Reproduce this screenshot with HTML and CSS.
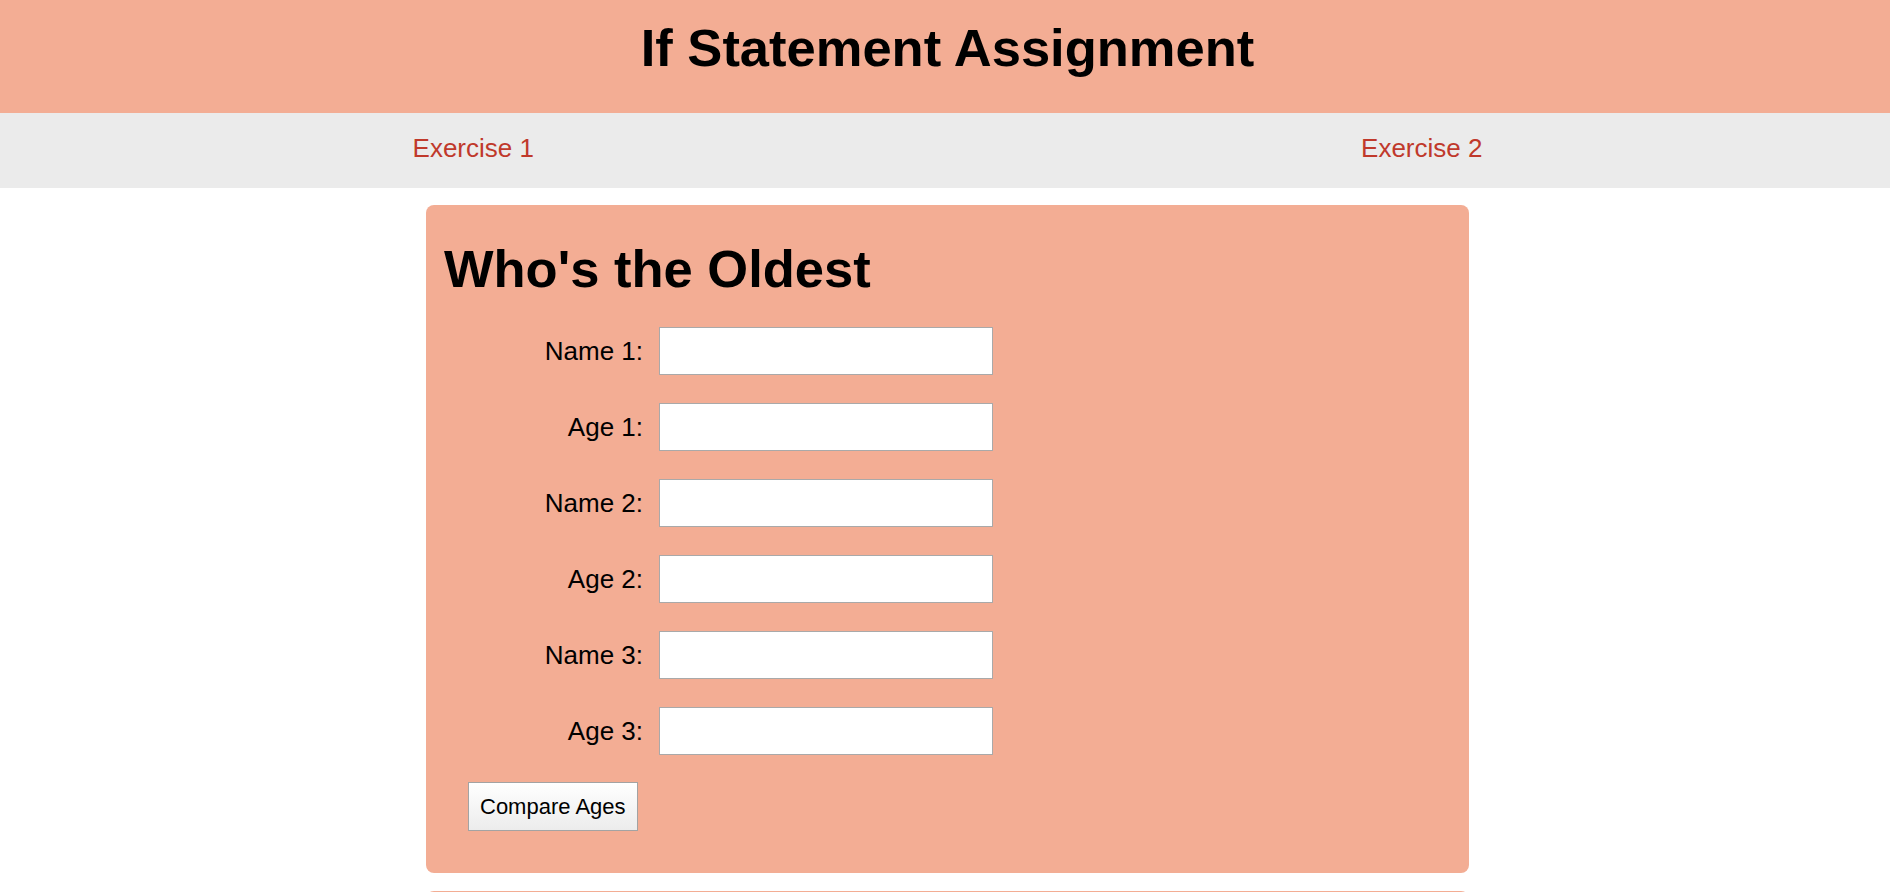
FILE: index.html
```html
<!DOCTYPE html>
<html lang="en">
<head>
<meta charset="utf-8">
<title>If Statement Assignment</title>
<link rel="stylesheet" href="styles.css">
</head>
<body>
<div class="page">
  <header class="header">
    <h1 class="title">If Statement Assignment</h1>
  </header>
  <nav class="nav">
    <a class="nav-link" href="#ex1">Exercise 1</a>
    <a class="nav-link" href="#ex2">Exercise 2</a>
  </nav>
  <main class="main">
    <section class="card" id="ex1">
      <h2 class="card-title">Who's the Oldest</h2>
      <form class="form">
        <label class="label" for="n1">Name 1:</label>
        <input class="field" id="n1" type="text">
        <label class="label" for="a1">Age 1:</label>
        <input class="field" id="a1" type="text">
        <label class="label" for="n2">Name 2:</label>
        <input class="field" id="n2" type="text">
        <label class="label" for="a2">Age 2:</label>
        <input class="field" id="a2" type="text">
        <label class="label" for="n3">Name 3:</label>
        <input class="field" id="n3" type="text">
        <label class="label" for="a3">Age 3:</label>
        <input class="field" id="a3" type="text">
        <div class="actions">
          <button class="btn" type="button">Compare Ages</button>
        </div>
      </form>
    </section>
    <section class="card card-next" id="ex2"></section>
  </main>
</div>
</body>
</html>
```

FILE: styles.css
```css
html, body {
  margin: 0;
  padding: 0;
  background: #ffffff;
}

body {
  font-family: "Liberation Sans", Arial, sans-serif;
  font-size: 26px;
  color: #000;
  overflow: hidden;
}

.page {
  width: 1895px;
}

.header {
  background: #f3ad94;
  padding: 18px 0 35px;
}

.title {
  margin: 0;
  font-size: 52.5px;
  line-height: 60px;
  font-weight: bold;
  text-align: center;
}

.nav {
  background: #ebebeb;
  margin: 0 -1px;
  padding: 20px 0 25px;
  display: grid;
  grid-template-columns: 1fr 1fr;
  justify-items: center;
  line-height: 30px;
}

.nav-link {
  color: #c0392b;
  text-decoration: none;
  font-size: 26px;
}

.main {
  display: flex;
  flex-direction: column;
  align-items: center;
  gap: 18px;
  padding-top: 17px;
}

.card {
  width: 1043px;
  box-sizing: border-box;
  background: #f3ad94;
  border-radius: 8px;
  padding: 34px 18px 42px;
}

.card-next {
  height: 300px;
}

.card-title {
  margin: 0;
  font-size: 52.5px;
  line-height: 60px;
  font-weight: bold;
}

.form {
  margin-top: 28px;
  display: grid;
  grid-template-columns: 199px 334px;
  column-gap: 16px;
  row-gap: 28px;
  align-items: center;
}

.label {
  text-align: right;
  font-size: 26px;
  line-height: 30px;
}

.field {
  box-sizing: border-box;
  width: 334px;
  height: 48px;
  margin: 0;
  border: 1px solid #a9a9a9;
  background: #fff;
  font-size: 20px;
  font-family: inherit;
  padding: 4px 8px;
}

.actions {
  grid-column: 1 / -1;
  padding-left: 24px;
  margin-top: -1px;
}

.btn {
  box-sizing: border-box;
  height: 49px;
  padding: 0 11px;
  font-family: "Liberation Sans", Arial, sans-serif;
  font-size: 22px;
  color: #000;
  background: linear-gradient(#ffffff, #ececec);
  border: 1px solid #a3a3a3;
  border-radius: 0;
}
```
